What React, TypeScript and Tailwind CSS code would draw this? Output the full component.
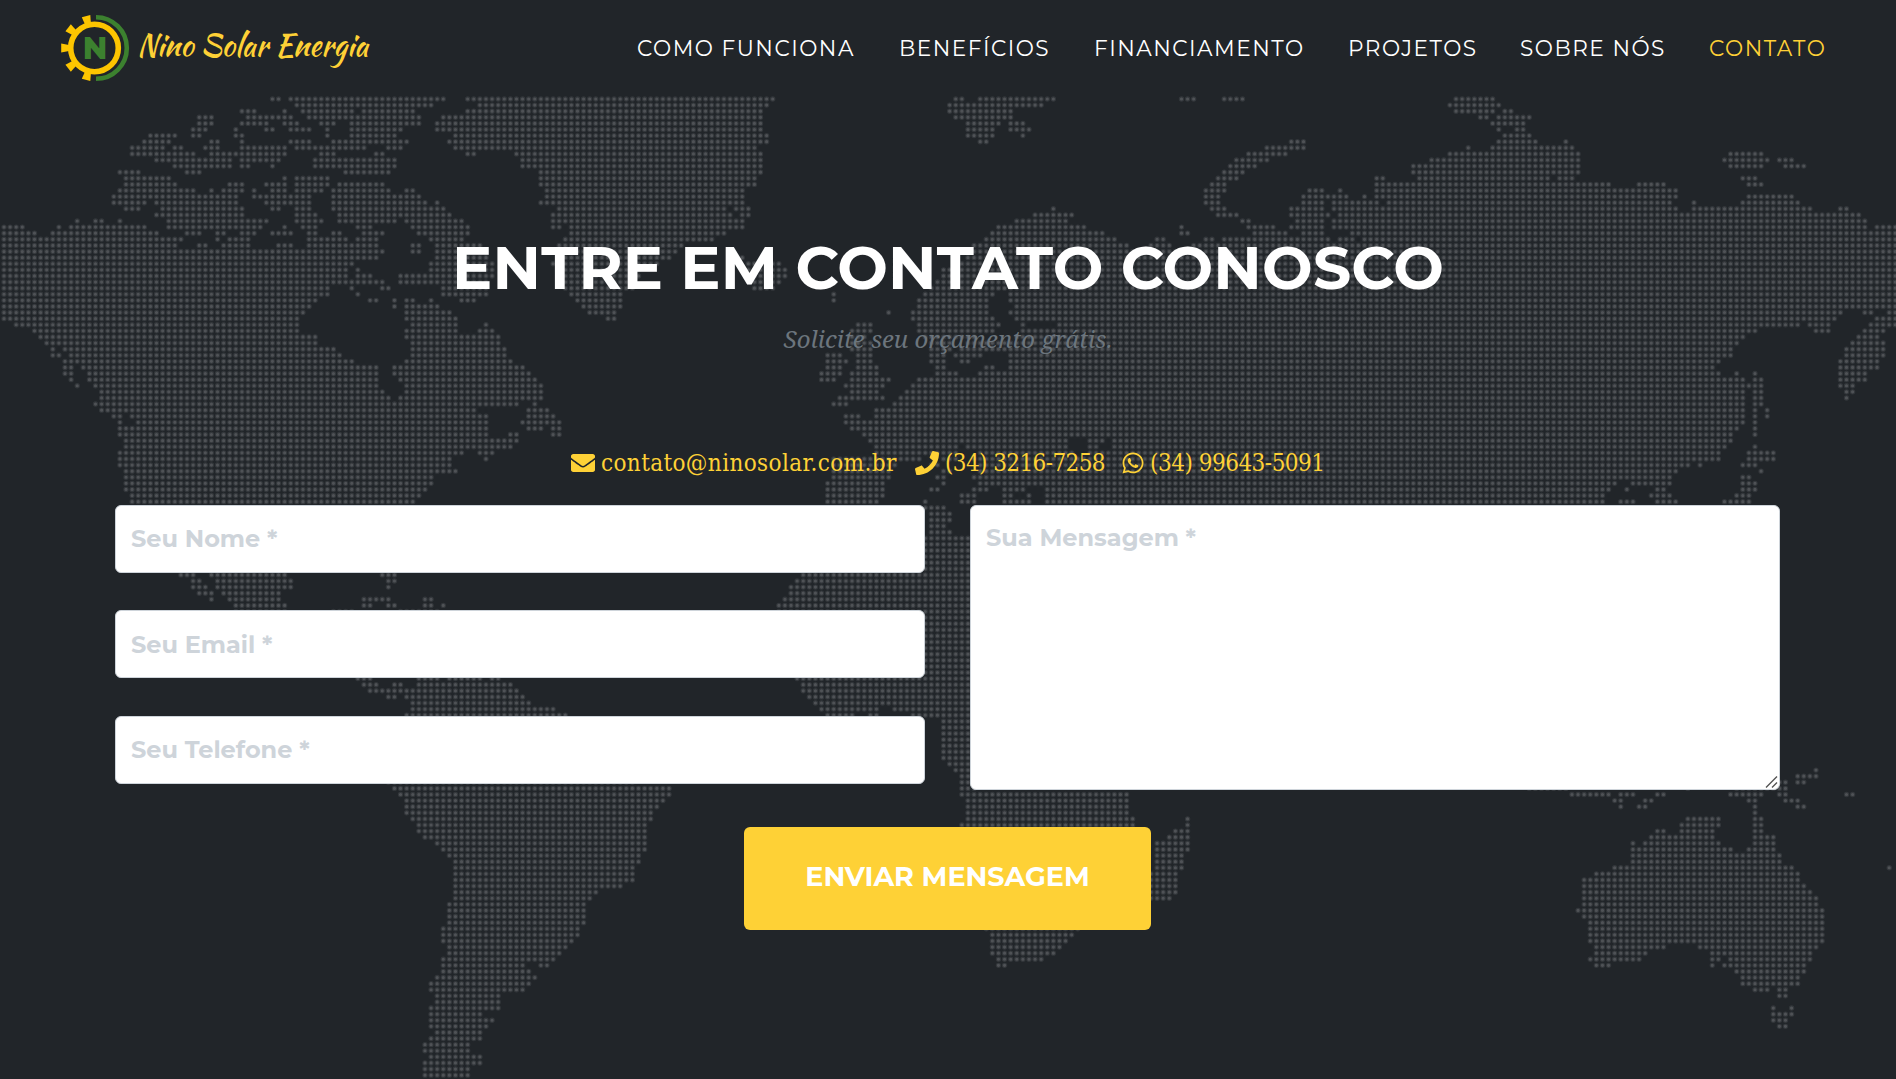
import React from 'react';
import { FaEnvelope, FaPhone, FaWhatsapp } from 'react-icons/fa';

/*
 * Dotted world map. Every line is "row|start-end start-end ..."; an open end
 * runs to the border of the sheet. Each sheet covers a third of the width.
 */
const SHEET_WEST = `
0|677-692 722-1100 1160-
1|737-1070 1190-
2|600-630 707 752-872 905-1030 1160-
3|495-525 615-660 677-722 767-1040 1100-
4|495-525 600-660 707-737 797-827 872-1040 1085-
5|480-510 585 660-675 722-767 812 872-995 1085-
6|372-435 480-495 585-600 812 872-980 1130-
7|357-417 525-540 600 722-767 827-1010 1115-
8|327-387 405 432-450 510-540 600-707 737-905 965-995 1130-
9|327-480 520-585 600-707 797-827 935-950 1160-1175 1280-
10|387-450 465-570 600-690 782-980 1295-
11|432-450 465-570 600-615 677 782-980 1295-
12|297-342 465-495 857-965 1340-
13|312-420 707 737-812 1340-
14|312-435 570-600 660-707 737-812 842-950 1340-
15|297-480 525 555-600 630 677-707 737-797 827-965 1005-1025 1355-
16|282-495 510-585 630-645 660-720 735-767 827-875 890-965 980-1040 1355-
17|282-360 387-585 660-722 737-767 827-1055 1085 1340-
18|312-342 402-600 677-692 737-767 827-1100 1385-
19|387-600 737-782 842-1115 1370-
20|192 237-252 297 417-660 737-797 842-980 1010-1145 1370-
21|8-55 147 177-360 417-645 707 752-782 890-920 1025-1160 1370-1385 1415-
22|8-85 132-390 465-495 540-555 600-630 677-722 767-782 827-845 905-950 1040-1160 1415-
23|8-450 540 570-615 767-860 890-935 1070-1145 1400-
24|8-435 495-510 555-615 692-722 767-860 875-935 1025-1040 1085-1190 1385-
25|8-950 1025-1040 1085-1200 1400-
26|8-935 1085-1205 1400-
27|8-875 1070-1220 1370-
28|8-860 890 1070-1220 1400-
29|8-860 890-920 995-1055 1070-1220 1400-
30|8-860 875-950 995-1055 1070-1205 1400-
31|8-815 875 950-965 1100-1205 1400-
32|8-812 890 1100-1205 1415-1545
33|8-782 920-935 980 1010-1025 1070 1145-1175 1430-1545
34|8-767 980 1010-1085 1445-1545
35|8-752 1010-1115 1460-1530
36|8-737 1010-1130 1510-1525
37|40-737 1025-1130 1205
38|85-737 1010-1130 1190-1220
39|100-782 1010-1235
40|115-782 1025-1235
41|130 160-827 1025-1250
42|130-145 177-845 1025-1250
43|160-175 190-875 1010-1265
44|160-175 205-935 980-1295
45|160-175 220-935 980-1310
46|177 220-935 995-1325
47|192 237-935 1010-1340
48|250-950 1010-1340
49|250-965 995-1340
50|237-1280 1325
51|252-1175 1310-1355
52|282-297 325-1205 1310-1370
53|297 340-1205 1295-1385
54|297-1205 1310-1340 1370-1385
55|297-1205 1265-1280 1370-1385
56|312-1280
57|312-1265
58|297-1145 1190-1220
59|297-1115 1205
60|297-1115
61|312-1130
62|312-1070
63|312-1070
64|312-1055
65|327-1040
66|327-1025
78|447-480 525-710 950-980
79|480-495 540-722 965-980
80|480-510 540-722 965
81|495-525 555-692
82|525 570-692 902-965 1055-1070
83|585-707 902-917 965-980 1055-1070 1100
84|585-700 825-870 990-1085
95|885-920 1040-1085 1115-1190 1220-1240
96|902-935 980-995 1040-1265
97|917-1280
98|965-980 1010-1295
99|1025-1310
100|1025-1375
101|1010-1405
112|965-
113|980-
114|995-
115|1010-
116|1010-
117|1010-
118|1025-
119|1040-
120|1040-
121|1055-
122|1085-
123|1100-
124|1115-
125|1130-
126|1130-
127|1130-
128|1130-
129|1130-1540
130|1130-1480
131|1130-1465
132|1115-1450
133|1115-1450
134|1115-1450
135|1115-1450
136|1100-1435
137|1100-1435
138|1100-1420
139|1115-1405
140|1115-1390
141|1100-1375
142|1100-1300 1340-1355
143|1100-1310
144|1085-1325
145|1070-1310
146|1070-1295
147|1085-1235
148|1085-1235
149|1070-1235
150|1070-1190
151|1070-1220
152|1070-1205
153|1085-1190
154|1070-1190
155|1055-1160
156|1055-1160
157|1070-1190
158|1055-1190
159|1055-1160
160|1055-1160`;

const SHEET_CENTER = `
0|0-350 800-820 862-890 907-1050 1365-1395 1470-1515
1|0-335 787-845 862-1015
2|0-320 787-940
3|0-320 802-940
4|0-320 832-910 940-970
5|0-320 832-895 940-985
6|0-335 832-895 970
7|0-335 862-880
8|0-305
9|0-320 1530-
10|0-320 1500-
11|0-320 1485-1545
12|0-320 1470-1515
13|0-305 1455-1500
14|0-305 1440-1470
15|0-275 1425-1470
16|0-275 1425-1455
17|0-275 1425-1455
18|0-230 260-290 1045 1440-1470
19|0-245 275-290 1000-1090 1455-1500
20|0-275 955-1075 1515-1530
21|0-275 907-1120 1365 1530-
22|0-230 892-1165 1365-1380 1545-
23|0-200 877-1200 1305-1320 1425-1440 1470-
24|0-125 850-1225 1290-1335 1400-
25|0-110 840-
26|0-95 270 840-
27|0-60 285-300 350-370 800-
28|0-15 285-380 780-1190 1205-
29|15 300-385 770-1175 1195-
30|300-370 760-
31|300-350 740-
32|500 725-890 940-
33|500 710-880 940-
34|710-880 955-
35|637 695-880 940-
36|695-895 955-
37|560-595 710-910 970 1060-
38|545-590 710-895 970-
39|545-575 725-850 955-
40|550-590 740-790 830-
41|545-590 740-790 815-
42|485-520 560-595 740-770 800-860 940-
43|485-530 560-590 740-770 815-835 940-
44|485-520 560-605 755-770 877-895 935-
45|470-515 545-605 755-800 862-
46|470-500 545-635 710-
47|530-620 695-
48|545-605 680-
49|515-620 665-
50|500-530 650-
51|605-
52|530-560 605-
53|530-575 590-
54|545-
55|575-
56|590-1080 1130-1165 1190-
57|605-800 830-1070 1135-1150 1190-
58|605-800 860-1085 1140-
59|500-710 770-800 850-
60|500-650 740-760 860-
61|500-640 770-785 860-
62|500-635 755-775 850-
63|485-620 770-780 860-910 920-
64|485-620 740-760 850-880 925-970 1025-
65|485-620 815-850 925-945 985 1025-
66|485-605 725 815-850 925-985 1030-
67|725-775
68|740-790
69|740-790
70|740-775
71|740-790
72|725-845
73|725-845
74|725-845
75|725-845
76|725-845
77|725-845
78|420-845
79|410-845
80|395-845
81|395-845
82|380-845
83|365-845
84|360-845
85|725-845
86|725-845
87|725-845
88|725-845
89|725-845
90|725-845
91|725-845
92|725-845
93|725-845
94|725-845
95|410-845
96|425-845
97|425-845
98|440-845
99|455-845
100|470-605 650-845
101|485-550 590-605 695-845
102|770-845
103|770-845
104|770-845
105|770-845
106|770-845
107|770-845
108|770-845
109|785-845
110|800-845
111|815-845
112|815-845
113|0-95 815-845
114|0-95 815-1220
115|0-80 832-1230
116|0-65 832-1230
117|0-50 832-1230
118|0-50 832-1245 1380
119|0-35 817-1245 1380
120|0-35 1350-1380
121|0-35 1335-1380
122|0-35 1305-1380
123|0-35 1305-1380
124|0-20 1305-1365
125|0-20 1305-1365
126|0-5 1305-1365
127|0-5 1290-1350
128|0-5 1290-1350
129|1290-1350
130|1290-1350
131|1290-1335
136|880-1100
137|892-1095
138|892-1080
139|892-1065
140|892-1050
141|907-1020
142|907-925`;

const SHEET_EAST = `
0|475-570
1|460-585
2|475-570 600-615
3|540-555 585-660
4|570-645
5|585 630-645
6|600-660
7|70-100 585-675 750
8|0-100 508 570-765
9|0-55 462-780 1160-1235
10|8 415-780 1145-1250 1280-1310
11|370-780 1160-1235 1295-1340
12|370-750 765-780
13|280-295 385-705 735-765 1190-1220
14|280-860 930-990 1205-1235
15|115-145 190 280-1020
16|100-160 175-205 250 280-1020 1205-1310
17|100-145 175-235 250-280 310-1005 1067 1190-1325
18|70-145 175-235 250-1025 1067-1355 1430-1445
19|70-155 190-1475
20|85-145 175-1490
21|8-25 70-145 175-1490 1520-
22|0-55 100-145 220-
23|0-160 190-220 250-
24|0-
25|0-
26|0-
27|0-
28|0-
29|0-
30|0-
31|0-
32|0-
33|0-
34|0-
35|0-1430 1490-1505 1550-
36|0-1415 1520-
37|0-1325 1355-1400 1505-
38|0-1220 1370-1400 1490-1535
39|0-1190 1475-1520
40|0-1175 1460-1535
41|0-1160 1445-1535
42|0-1160 1445-1535
43|0-1130 1430-1520
44|0-1115 1430-1520
45|0-1130 1175 1220 1430-1490
46|0-1190 1220-1235 1430-1490
47|0-1190 1205-1235 1430 1445-1460
48|0-1190 1220-1235 1445-1460
49|0-1190 1220-1235 1445
50|0-1190 1220-1235
51|0-1190 1220 1250
52|0-1190 1220 1250
53|0-1190 1220
54|0-1175 1220
55|0-1160 1220
56|0-1160
57|0-1145 1220
58|0-1130 1205-1265
59|0-1130 1205-1265
60|0-1055 1085 1190-1220
61|0-1025 1235
62|0-1010 1190-1205
63|0-875 920-1010 1190-1220
64|0-860 905 980-995 1190-1220
65|0-845 965-1010 1175-1205
66|0-845 890-915 980-1025 1145-1205
110|1370
111|1325-1370
112|1285-1295 1325-1340
113|660-750 1050 1175-1295
114|765-860 885-915 980-995 1160-1235 1280-1295 1447-1462
115|870-885 945-960 1205-1220 1295-1325
116|885 930-945 1220 1325-1340
117|1220
118|1050-1130 1220-1235
119|1040-1130 1220-1235
120|980-992 1037-1115 1220-1235
121|960-1115 1220-1265
122|915 945-1130 1220-1265
123|915-1160 1205-1265
124|915-1280
125|915-1280
126|870-1310 1552
127|825-1325
128|795-1325
129|795-1340
130|795-1355
131|795-1370
132|795-1370
133|780-1385
134|795-1385
135|810-1385
136|810-1385
137|810-1385
138|810-1385
139|825-995 1082-1370
140|825-945 1112-1355
141|810-930 1112-1130 1158-1355
142|825-855 1112 1143-1340
143|1173-1340
144|1188-1325
145|1188-1325
146|1220-1250 1280-1295
147|1280-1295
149|1265 1310
150|1265-1310
151|1265-1295
152|1280-1295`;

const PITCH = 6.101;
const SHEET_SCALE = 2.481;

function buildDots() {
  const cells = new Set<string>();
  [SHEET_WEST, SHEET_CENTER, SHEET_EAST].forEach((sheet, index) => {
    const column = (value: number) =>
      Math.round((index * 632 + value / SHEET_SCALE - 4) / PITCH);
    sheet
      .trim()
      .split('\n')
      .forEach((line) => {
        const [row, spans] = line.split('|');
        spans.split(' ').forEach((span) => {
          const [from, to] = span.split('-');
          const end = to === undefined ? from : to === '' ? '1566' : to;
          for (let c = Math.max(0, column(+from)); c <= column(+end); c++) {
            cells.add(`M${(4 + c * PITCH).toFixed(2)} ${(99 + +row * PITCH).toFixed(2)}h0`);
          }
        });
      });
  });
  return [...cells].join('');
}

const DOTS = buildDots();

function WorldMap() {
  return (
    <svg
      className="absolute inset-0 h-full w-full"
      viewBox="0 0 1896 1079"
      fill="none"
      strokeLinecap="round"
      aria-hidden="true"
    >
      <path d={DOTS} stroke="#33373b" strokeWidth="5.4" />
      <path d={DOTS} stroke="#4f5256" strokeWidth="3.2" />
    </svg>
  );
}

function Logo() {
  return (
    <a href="#" className="flex items-center">
      <svg className="overflow-visible" width="330" height="72" viewBox="0 0 330 72">
        <g fill="#fdc500">
          {[-76, -38, 0, 38, 76].map((angle) => (
            <path
              key={angle}
              d="M2.2 31.6L10 33V39L2.2 40.4Z"
              transform={`rotate(${angle} 35 36)`}
            />
          ))}
        </g>
        <circle cx="35.5" cy="36" r="23.8" fill="none" stroke="#fdc500" strokeWidth="5.6" />
        <path d="M37 5.2A30.8 30.8 0 0 1 37 66.8" fill="none" stroke="#3c812f" strokeWidth="4.6" />
        <text
          x="36"
          y="46.8"
          textAnchor="middle"
          fill="#3c812f"
          fontFamily="Montserrat, Inter, sans-serif"
          fontWeight="800"
          fontSize="30.5"
        >
          N
        </text>
        <text
          x="78"
          y="43.5"
          fill="#fed136"
          fontFamily='"Kaushan Script", Lato, sans-serif'
          fontSize="31.5"
          textLength="231"
          lengthAdjust="spacingAndGlyphs"
        >
          Nino Solar Energia
        </text>
      </svg>
    </a>
  );
}

const LINKS = [
  { label: 'Como funciona', width: 'w-[262px]' },
  { label: 'Benefícios', width: 'w-[195px]' },
  { label: 'Financiamento', width: 'w-[254px]' },
  { label: 'Projetos', width: 'w-[172px]' },
  { label: 'Sobre nós', width: 'w-[189px]' },
  { label: 'Contato', width: 'w-[119px]', active: true },
];

function Navbar() {
  return (
    <nav className="relative flex h-24 items-center justify-between bg-[#212529] pr-[68px] pl-[59px]">
      <Logo />
      <ul className="flex pt-px text-[21.6px] tracking-[1.5px] uppercase">
        {LINKS.map((link) => (
          <li key={link.label} className={`${link.width} whitespace-nowrap`}>
            <a href="#" className={link.active ? 'text-[#fed136]' : 'text-white'}>
              {link.label}
            </a>
          </li>
        ))}
      </ul>
    </nav>
  );
}

const FIELD =
  'block w-full rounded-md border border-[#ced4da] bg-white px-[15px] text-[24px] font-bold text-[#495057] outline-none placeholder:text-[#ced4da] placeholder:opacity-100';

export default function App() {
  return (
    <div className="relative h-[1079px] w-full overflow-hidden bg-[#212529] font-[Montserrat,Inter,sans-serif]">
      <WorldMap />
      <Navbar />
      <section className="relative mx-auto flex w-[1666px] flex-col items-center pt-[136px]">
        <h2 className="h-[72px] text-[60px] leading-[72px] font-bold tracking-[0.2px] whitespace-nowrap text-white uppercase">
          Entre em contato conosco
        </h2>
        <h3 className="mt-[17px] h-9 font-['Noto_Serif','DejaVu_Serif_Condensed','DejaVu_Serif',serif] text-[24px] leading-9 whitespace-nowrap text-[#6c757d] italic">
          Solicite seu orçamento grátis.
        </h3>
        <div className="mt-[88px] flex h-9 w-[754px] items-center font-['DejaVu_Serif_Condensed',serif] text-[24px] whitespace-nowrap text-[#fed136]">
          <a href="#" className="flex w-[344px] items-center gap-1.5 tracking-[0.38px]">
            <FaEnvelope size={24} />
            contato@ninosolar.com.br
          </a>
          <a href="#" className="flex w-[206px] items-center gap-1.5 tracking-[-0.6px]">
            <FaPhone size={24} />
            (34) 3216-7258
          </a>
          <a href="#" className="flex items-center gap-[5px] tracking-[-0.5px]">
            <FaWhatsapp size={24} />
            (34) 99643-5091
          </a>
        </div>
        <form className="mt-6 flex w-full flex-col items-start">
          <div className="grid w-[1665px] grid-cols-2 gap-[45px]">
            <div className="flex flex-col gap-[37.9px]">
              <input className={`${FIELD} h-[67.6px]`} placeholder="Seu Nome *" />
              <input className={`${FIELD} h-[67.6px]`} placeholder="Seu Email *" />
              <input className={`${FIELD} h-[67.6px]`} placeholder="Seu Telefone *" />
            </div>
            <div className="relative">
              <textarea
                className={`${FIELD} h-[285px] resize-none py-[14px] leading-9`}
                placeholder="Sua Mensagem *"
              />
              <svg
                className="absolute right-[2px] bottom-[2px]"
                width="13"
                height="12"
                viewBox="0 0 13 12"
                fill="none"
                stroke="#555"
                strokeWidth="1.4"
              >
                <path d="M1 11.5L12 0.5M7 11.5L12 6.5" />
              </svg>
            </div>
          </div>
          <button
            type="button"
            className="mt-[37px] ml-[629px] h-[103px] w-[407px] rounded-md bg-[#fed136] pb-0.5 text-[27px] font-bold whitespace-nowrap text-white uppercase"
          >
            Enviar Mensagem
          </button>
        </form>
      </section>
    </div>
  );
}
